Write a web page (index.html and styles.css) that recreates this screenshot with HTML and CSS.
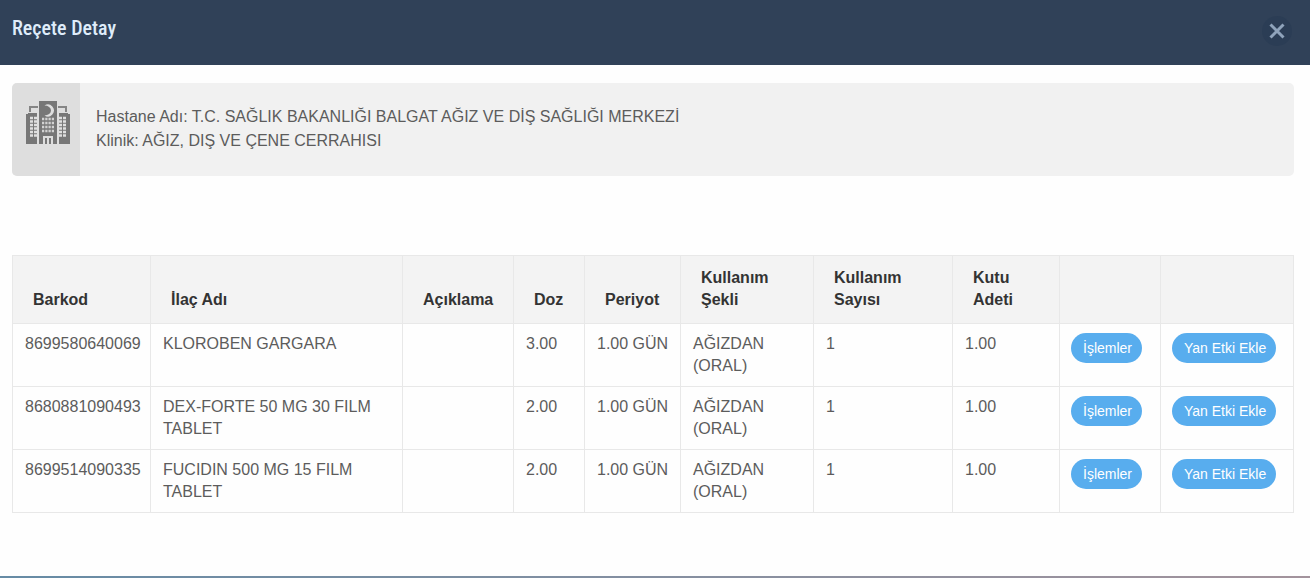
FILE: index.html
```html
<!DOCTYPE html>
<html lang="tr">
  <head>
    <meta charset="UTF-8">
    <meta name="viewport" content="width=device-width,initial-scale=1">
    <title>Reçete Detay</title>
    <link rel="stylesheet" href="styles.css">
  </head>
  <body>
    <header class="modal-header">
      <h1 class="modal-title">Reçete Detay</h1>
      <button type="button" class="close" aria-label="Kapat">
        <svg width="16" height="16" viewBox="0 0 16 16">
          <path d="M1.500 1.500L14.500 14.500M14.500 1.500L1.500 14.500" stroke="#8fa3bb" stroke-width="3"/>
        </svg>
      </button>
    </header>

    <main class="modal-body">
      <section class="info">
        <div class="info-icon">
          <svg width="44" height="44" viewBox="0 0 44 44">
            <path d="M4 11V6h8M40 11V6h-8" fill="none" stroke="#858585" stroke-width="2"/>
            <path d="M13 0h18v43H13zM0 13h2v-1h9v31H0zM33 12h9v1h2v30H33z" fill="#777"/>
            <!-- crescent -->
            <path d="M18.500 4.500a6 6 0 1 1 0 10a6.500 5 0 0 0 0-10z" fill="#dedede"/>
            <!-- windows -->
            <path d="M16 18h12M16 22h12M16 26h12M16 30h12" stroke="#d2d2d2" stroke-width="2.500" stroke-dasharray="2.250 1"/>
            <path d="M4 17h7M4 20.500h7M4 24h7M4 27.500h7M4 31h7M4 34.500h7M33 17h7M33 20.500h7M33 24h7M33 27.500h7M33 31h7M33 34.500h7" stroke="#dedede" stroke-width="2.500" stroke-dasharray="3 1"/>
            <!-- door -->
            <path d="M17 35h10v8h-2v-6h-2v6h-2v-6h-2v6h-2z" fill="#dedede"/>
          </svg>
        </div>
        <div class="info-text">
          <p>Hastane Adı: T.C. SAĞLIK BAKANLIĞI BALGAT AĞIZ VE DİŞ SAĞLIĞI MERKEZİ</p>
          <p>Klinik: AĞIZ, DIŞ VE ÇENE CERRAHISI</p>
        </div>
      </section>

      <table class="table">
        <colgroup>
          <col class="col-barcode">
          <col>
          <col class="col-note">
          <col class="col-dose">
          <col class="col-period">
          <col class="col-method">
          <col class="col-count">
          <col class="col-box">
          <col class="col-actions">
          <col class="col-effect">
        </colgroup>
        <thead>
          <tr>
            <th>Barkod</th>
            <th>İlaç Adı</th>
            <th>Açıklama</th>
            <th>Doz</th>
            <th>Periyot</th>
            <th>Kullanım Şekli</th>
            <th>Kullanım Sayısı</th>
            <th>Kutu Adeti</th>
            <th></th>
            <th></th>
          </tr>
        </thead>
        <tbody>
          <tr>
            <td>8699580640069</td>
            <td>KLOROBEN GARGARA</td>
            <td></td>
            <td>3.00</td>
            <td>1.00 GÜN</td>
            <td>AĞIZDAN (ORAL)</td>
            <td>1</td>
            <td>1.00</td>
            <td><button type="button" class="btn">İşlemler</button></td>
            <td><button type="button" class="btn">Yan Etki Ekle</button></td>
          </tr>
          <tr>
            <td>8680881090493</td>
            <td>DEX-FORTE 50 MG 30 FILM TABLET</td>
            <td></td>
            <td>2.00</td>
            <td>1.00 GÜN</td>
            <td>AĞIZDAN (ORAL)</td>
            <td>1</td>
            <td>1.00</td>
            <td><button type="button" class="btn">İşlemler</button></td>
            <td><button type="button" class="btn">Yan Etki Ekle</button></td>
          </tr>
          <tr>
            <td>8699514090335</td>
            <td>FUCIDIN 500 MG 15 FILM TABLET</td>
            <td></td>
            <td>2.00</td>
            <td>1.00 GÜN</td>
            <td>AĞIZDAN (ORAL)</td>
            <td>1</td>
            <td>1.00</td>
            <td><button type="button" class="btn">İşlemler</button></td>
            <td><button type="button" class="btn">Yan Etki Ekle</button></td>
          </tr>
        </tbody>
      </table>
    </main>

    <div class="page-edge"></div>
  </body>
</html>
```
FILE: styles.css
```css
* {
  box-sizing: border-box;
}

body {
  display: flex;
  flex-direction: column;
  min-height: 100vh;
  margin: 0;
  background-color: #fefefe;
  color: #5c5c5c;
  font-family: "Liberation Sans", Arial, Helvetica, sans-serif;
  font-size: 16px;
  line-height: 22px;
}

/* Modal header */
.modal-header {
  display: flex;
  justify-content: space-between;
  align-items: flex-start;
  height: 65px;
  padding: 16px 18px 0 12px;
  background-color: #304158;
}

.modal-title {
  margin: 0;
  color: #dfecfa;
  font-family: "Roboto Condensed", "Liberation Sans Narrow", Roboto, sans-serif;
  font-size: 20px;
  font-weight: 500;
  line-height: 24px;
}

/* The Close Button (x) */
.close {
  display: flex;
  align-items: center;
  justify-content: center;
  width: 30px;
  height: 30px;
  padding: 0;
  border: none;
  border-radius: 50%;
  background-color: #2b3d55;
  cursor: pointer;
}

.modal-body {
  flex: 1;
  padding: 18px 16px 32px 12px;
}

/* Hospital box */
.info {
  display: flex;
  min-height: 93px;
  margin-bottom: 79px;
  border-radius: 5px;
  overflow: hidden;
  background-color: #f1f1f1;
}

.info-icon {
  display: flex;
  justify-content: center;
  width: 68px;
  padding: 18px 0 0 4px;
  background-color: #dedede;
}

.info-text {
  padding: 22px 16px;
  line-height: 24px;
}

.info-text p {
  margin: 0;
}

/* Prescription table */
.table {
  width: 100%;
  table-layout: fixed;
  border-collapse: collapse;
}

.table th,
.table td {
  border: 1px solid #e8e8e8;
  text-align: left;
}

.table th {
  height: 68px;
  padding: 10px 20px 12px 20px;
  background-color: #f3f3f3;
  color: #333;
  vertical-align: bottom;
}

.table td {
  height: 63px;
  padding: 9px 8px 9px 12px;
  vertical-align: top;
}

/* Button columns have less padding */
.table td:nth-last-child(-n+2) {
  padding-left: 11px;
}

.col-barcode { width: 138px; }
.col-note { width: 111px; }
.col-dose { width: 71px; }
.col-period { width: 96px; }
.col-method { width: 133px; }
.col-count { width: 139px; }
.col-box { width: 107px; }
.col-actions { width: 101px; }
.col-effect { width: 133px; }

.btn {
  display: block;
  height: 30px;
  padding: 0 10px 0 12px;
  border: none;
  border-radius: 15px;
  background-color: #58adee;
  color: #fff;
  font-family: inherit;
  font-size: 14px;
  white-space: nowrap;
  cursor: pointer;
}

.btn:hover {
  opacity: 0.8;
}

.page-edge {
  height: 2px;
  background: linear-gradient(to right, #668ba5, #a3939c);
}
```
